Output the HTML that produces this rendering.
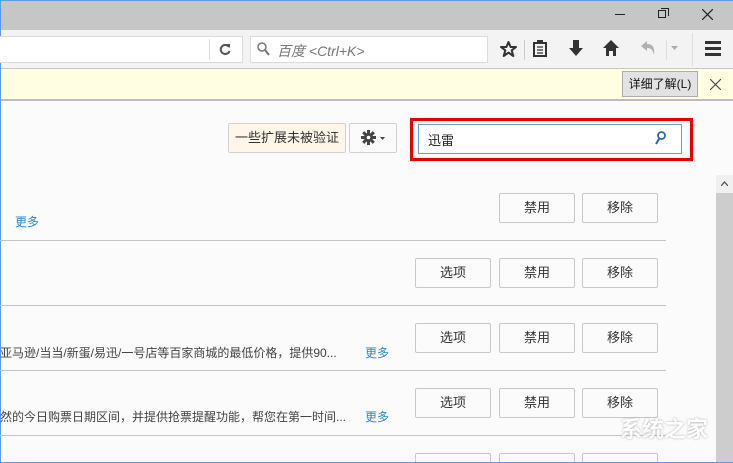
<!DOCTYPE html>
<html style="width:733px;height:463px;overflow:hidden"><head><meta charset="utf-8"><style>
*{margin:0;padding:0;box-sizing:border-box}
body{width:733px;height:463px;overflow:hidden;position:relative;background:#fbfbfb;font-family:"Liberation Sans","Noto Sans CJK SC",sans-serif;font-size:12px;color:#333}
.a{position:absolute}
.btn{position:absolute;border:1px solid #c8c8c8;border-radius:2px;background:#fbfbfb;text-align:center;font-size:13px;color:#333;line-height:28px;height:30px;width:76px}
.sep{position:absolute;left:0;width:666px;height:1px;background:#c4c4c4}
.more{position:absolute;color:#2a88d0;font-size:12px}
.desc{position:absolute;left:0;font-size:12px;color:#444;white-space:nowrap}
</style></head><body>
<div class="a" style="left:0;top:0;width:733px;height:1px;background:#5d9be6"></div>
<div class="a" style="left:0;top:0;width:1px;height:463px;background:#5d9be6"></div>
<!-- titlebar -->
<div class="a" style="left:1px;top:1px;width:732px;height:29px;background:#c6c6c6"></div>
<div class="a" style="left:615px;top:14px;width:10px;height:1px;background:#222"></div>
<div class="a" style="left:658px;top:10px;width:8px;height:8px;border:1px solid #222"></div>
<div class="a" style="left:661px;top:8px;width:8px;height:8px;border-top:1px solid #222;border-right:1px solid #222"></div>
<svg class="a" style="left:702px;top:9px" width="11" height="11"><path d="M0 0L11 11M11 0L0 11" stroke="#222" stroke-width="1.2"/></svg>
<!-- toolbar -->
<div class="a" style="left:1px;top:30px;width:732px;height:39px;background:#f3f3f3"></div>
<div class="a" style="left:0;top:36px;width:243px;height:27px;background:#fff;border:1px solid #dcdcdc;border-left:none"></div>
<div class="a" style="left:209px;top:39px;width:1px;height:21px;background:#ddd"></div>
<svg class="a" style="left:219px;top:43px" width="12" height="12"><path d="M10 4A4.5 4.5 0 1 0 10.5 8" fill="none" stroke="#555" stroke-width="2"/><path d="M7 1H11V5Z" fill="#555"/></svg>
<div class="a" style="left:250px;top:36px;width:238px;height:27px;background:#fff;border:1px solid #dcdcdc"></div>
<svg class="a" style="left:257px;top:42px" width="13" height="14"><circle cx="5" cy="5" r="4" fill="none" stroke="#777" stroke-width="1.5"/><path d="M8 8L12 13" stroke="#777" stroke-width="2"/></svg>
<div class="a" style="left:277px;top:41px;font-size:14px;color:#777;font-style:italic">百度 &lt;Ctrl+K&gt;</div>
<svg class="a" style="left:500px;top:41px" width="17" height="16"><path d="M8.5 1L10.6 6H16L11.7 9.3L13.3 15L8.5 11.6L3.7 15L5.3 9.3L1 6H6.4Z" fill="none" stroke="#333" stroke-width="2" stroke-linejoin="round"/></svg>
<div class="a" style="left:524px;top:40px;width:1px;height:20px;background:#ccc"></div>
<svg class="a" style="left:533px;top:40px" width="14" height="17"><rect x="1" y="3" width="12" height="13" fill="none" stroke="#333" stroke-width="2"/><rect x="4" y="0" width="6" height="4" fill="#333"/><path d="M4 7H10M4 10H10M4 13H10" stroke="#333" stroke-width="1.3"/></svg>
<svg class="a" style="left:569px;top:40px" width="14" height="17"><rect x="4" y="0" width="6" height="9" fill="#333"/><path d="M0 8H14L7 16Z" fill="#333"/></svg>
<svg class="a" style="left:603px;top:40px" width="16" height="16"><path d="M8 0L16 8H13V16H10V11H6V16H3V8H0Z" fill="#333"/></svg>
<svg class="a" style="left:641px;top:41px" width="14" height="15"><path d="M0 5L6 0V3C12 3 14 7 13 14C12 9 10 7 6 7V10Z" fill="#b0b0b0"/></svg>
<div class="a" style="left:666px;top:40px;width:1px;height:20px;background:#ddd"></div>
<svg class="a" style="left:671px;top:46px" width="7" height="4"><path d="M0 0H7L3.5 4Z" fill="#aaa"/></svg>
<div class="a" style="left:692px;top:33px;width:1px;height:33px;background:#ddd"></div>
<div class="a" style="left:705px;top:41px;width:16px;height:3px;background:#333"></div>
<div class="a" style="left:705px;top:47px;width:16px;height:3px;background:#333"></div>
<div class="a" style="left:705px;top:53px;width:16px;height:3px;background:#333"></div>
<!-- notification -->
<div class="a" style="left:1px;top:68px;width:732px;height:1px;background:#c8c8c8"></div>
<div class="a" style="left:1px;top:69px;width:732px;height:31px;background:#fffde2"></div>
<div class="a" style="left:622px;top:71px;width:76px;height:26px;background:#e2e2e2;border:1px solid #adadad;font-size:12px;line-height:24px;text-align:center;color:#111">详细了解(L)</div>
<svg class="a" style="left:710px;top:79px" width="11" height="11"><path d="M0 0L11 11M11 0L0 11" stroke="#444" stroke-width="1.1"/></svg>
<div class="a" style="left:1px;top:99px;width:732px;height:2px;background:#bcbcbc"></div>
<!-- header controls -->
<div class="a" style="left:228px;top:123px;width:118px;height:30px;background:#fdf6e9;border:1px solid #d0d0d0;border-radius:2px;font-size:13px;line-height:28px;text-align:center">一些扩展未被验证</div>
<div class="a" style="left:349px;top:123px;width:48px;height:30px;background:#fbfbfb;border:1px solid #d0d0d0;border-radius:2px"></div>
<svg class="a" style="left:361px;top:130px" width="15" height="15"><g stroke="#444" stroke-width="3"><path d="M7.5 0V15M0 7.5H15M2.2 2.2L12.8 12.8M12.8 2.2L2.2 12.8"/></g><circle cx="7.5" cy="7.5" r="4.5" fill="#444"/><circle cx="7.5" cy="7.5" r="1.8" fill="#fbfbfb"/></svg>
<svg class="a" style="left:380px;top:137px" width="5" height="3"><path d="M0 0H5L2.5 3Z" fill="#444"/></svg>
<div class="a" style="left:410px;top:118px;width:283px;height:43px;border:3px solid #e60000"></div>
<div class="a" style="left:418px;top:124px;width:264px;height:30px;background:#fff;border:1px solid #6f9fc8"></div>
<div class="a" style="left:428px;top:130px;font-size:13px;color:#222">迅雷</div>
<svg class="a" style="left:655px;top:131px" width="11" height="14"><circle cx="6.5" cy="4.5" r="3.5" fill="none" stroke="#2e6aa8" stroke-width="1.8"/><path d="M4.5 7L1 13" stroke="#2e6aa8" stroke-width="2"/></svg>
<!-- scrollbar -->
<div class="a" style="left:716px;top:175px;width:17px;height:288px;background:#cdcdcd"></div>
<div class="a" style="left:716px;top:175px;width:17px;height:18px;background:#f0f0f0"></div>
<svg class="a" style="left:721px;top:181px" width="7" height="5"><path d="M0 5L3.5 1L7 5" fill="none" stroke="#555" stroke-width="1.3"/></svg>
<!-- rows -->
<div class="btn" style="left:499px;top:193px">禁用</div>
<div class="btn" style="left:582px;top:193px">移除</div>
<div class="more" style="left:15px;top:213px">更多</div>
<div class="sep" style="top:240px"></div>
<div class="btn" style="left:415px;top:258px">选项</div>
<div class="btn" style="left:499px;top:258px">禁用</div>
<div class="btn" style="left:582px;top:258px">移除</div>
<div class="sep" style="top:305px"></div>
<div class="btn" style="left:415px;top:323px">选项</div>
<div class="btn" style="left:499px;top:323px">禁用</div>
<div class="btn" style="left:582px;top:323px">移除</div>
<div class="desc" style="top:344px">亚马逊/当当/新蛋/易迅/一号店等百家商城的最低价格，提供90...</div>
<div class="more" style="left:365px;top:344px">更多</div>
<div class="sep" style="top:370px"></div>
<div class="btn" style="left:415px;top:388px">选项</div>
<div class="btn" style="left:499px;top:388px">禁用</div>
<div class="btn" style="left:582px;top:388px">移除</div>
<div class="desc" style="top:408px">然的今日购票日期区间，并提供抢票提醒功能，帮您在第一时间...</div>
<div class="more" style="left:365px;top:408px">更多</div>
<div class="sep" style="top:435px"></div>
<div class="btn" style="left:415px;top:453px"></div>
<div class="btn" style="left:499px;top:453px"></div>
<div class="btn" style="left:582px;top:453px"></div>
<div class="a" style="left:620px;top:412px;font-size:22px;color:#fff;font-weight:bold;opacity:.85;text-shadow:0 0 2px #999">系统之家</div>
<div class="a" style="left:0;top:462px;width:733px;height:1px;background:#5d9be6"></div>
</body></html>
